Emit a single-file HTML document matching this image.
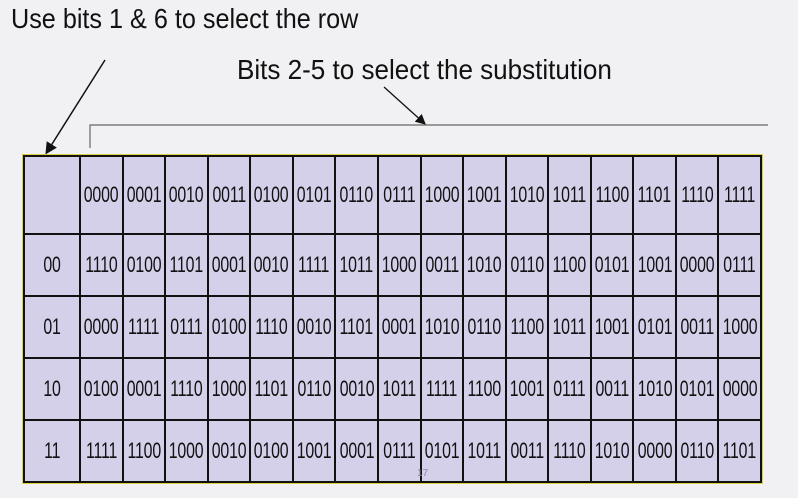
<!DOCTYPE html>
<html><head><meta charset="utf-8"><style>
body{margin:0;width:798px;height:498px;background:#f1f1f3;overflow:hidden;position:relative;font-family:"Liberation Sans",Arial,sans-serif;color:#111}
.t{position:absolute;white-space:nowrap;transform-origin:0 0;font-size:28px;line-height:28px}
table{position:absolute;left:23px;top:155px;width:739px;table-layout:fixed;border-collapse:collapse;background:#d4d0ea;outline:1px solid #d8d040}
td{border:2px solid #111;padding:0;text-align:center;font-size:22px;height:60px;overflow:visible;white-space:nowrap}
td span{display:inline-block;transform:scaleX(.72);margin:0 -20px;letter-spacing:-.2px}
tr:first-child td{height:76px}
</style></head><body>
<div class="t" style="left:11px;top:5px;transform:scaleX(.9)">Use bits 1 &amp; 6 to select the row</div>
<div class="t" style="left:237px;top:56px;transform:scaleX(.93)">Bits 2-5 to select the substitution</div>
<svg width="798" height="498" style="position:absolute;left:0;top:0">
<defs><marker id="a" markerWidth="8" markerHeight="8" refX="6" refY="4" orient="auto"><path d="M0,0 L8,4 L0,8z" fill="#111"/></marker></defs>
<line x1="105" y1="60" x2="47" y2="152" stroke="#111" stroke-width="1.5" marker-end="url(#a)"/>
<line x1="384" y1="87" x2="424" y2="123" stroke="#111" stroke-width="1.3" marker-end="url(#a)"/>
<polyline points="90,148 90,125 768,125" fill="none" stroke="#666" stroke-width="1.2"/>
</svg>
<table>
<colgroup><col style="width:56px"><col span="16"></colgroup>
<tr><td></td><td><span>0000</span></td><td><span>0001</span></td><td><span>0010</span></td><td><span>0011</span></td><td><span>0100</span></td><td><span>0101</span></td><td><span>0110</span></td><td><span>0111</span></td><td><span>1000</span></td><td><span>1001</span></td><td><span>1010</span></td><td><span>1011</span></td><td><span>1100</span></td><td><span>1101</span></td><td><span>1110</span></td><td><span>1111</span></td></tr>
<tr><td><span>00</span></td><td><span>1110</span></td><td><span>0100</span></td><td><span>1101</span></td><td><span>0001</span></td><td><span>0010</span></td><td><span>1111</span></td><td><span>1011</span></td><td><span>1000</span></td><td><span>0011</span></td><td><span>1010</span></td><td><span>0110</span></td><td><span>1100</span></td><td><span>0101</span></td><td><span>1001</span></td><td><span>0000</span></td><td><span>0111</span></td></tr>
<tr><td><span>01</span></td><td><span>0000</span></td><td><span>1111</span></td><td><span>0111</span></td><td><span>0100</span></td><td><span>1110</span></td><td><span>0010</span></td><td><span>1101</span></td><td><span>0001</span></td><td><span>1010</span></td><td><span>0110</span></td><td><span>1100</span></td><td><span>1011</span></td><td><span>1001</span></td><td><span>0101</span></td><td><span>0011</span></td><td><span>1000</span></td></tr>
<tr><td><span>10</span></td><td><span>0100</span></td><td><span>0001</span></td><td><span>1110</span></td><td><span>1000</span></td><td><span>1101</span></td><td><span>0110</span></td><td><span>0010</span></td><td><span>1011</span></td><td><span>1111</span></td><td><span>1100</span></td><td><span>1001</span></td><td><span>0111</span></td><td><span>0011</span></td><td><span>1010</span></td><td><span>0101</span></td><td><span>0000</span></td></tr>
<tr><td><span>11</span></td><td><span>1111</span></td><td><span>1100</span></td><td><span>1000</span></td><td><span>0010</span></td><td><span>0100</span></td><td><span>1001</span></td><td><span>0001</span></td><td><span>0111</span></td><td><span>0101</span></td><td><span>1011</span></td><td><span>0011</span></td><td><span>1110</span></td><td><span>1010</span></td><td><span>0000</span></td><td><span>0110</span></td><td><span>1101</span></td></tr>
</table>
<div style="position:absolute;left:417px;top:468px;font-size:10px;color:#88a">17</div>
</body></html>
